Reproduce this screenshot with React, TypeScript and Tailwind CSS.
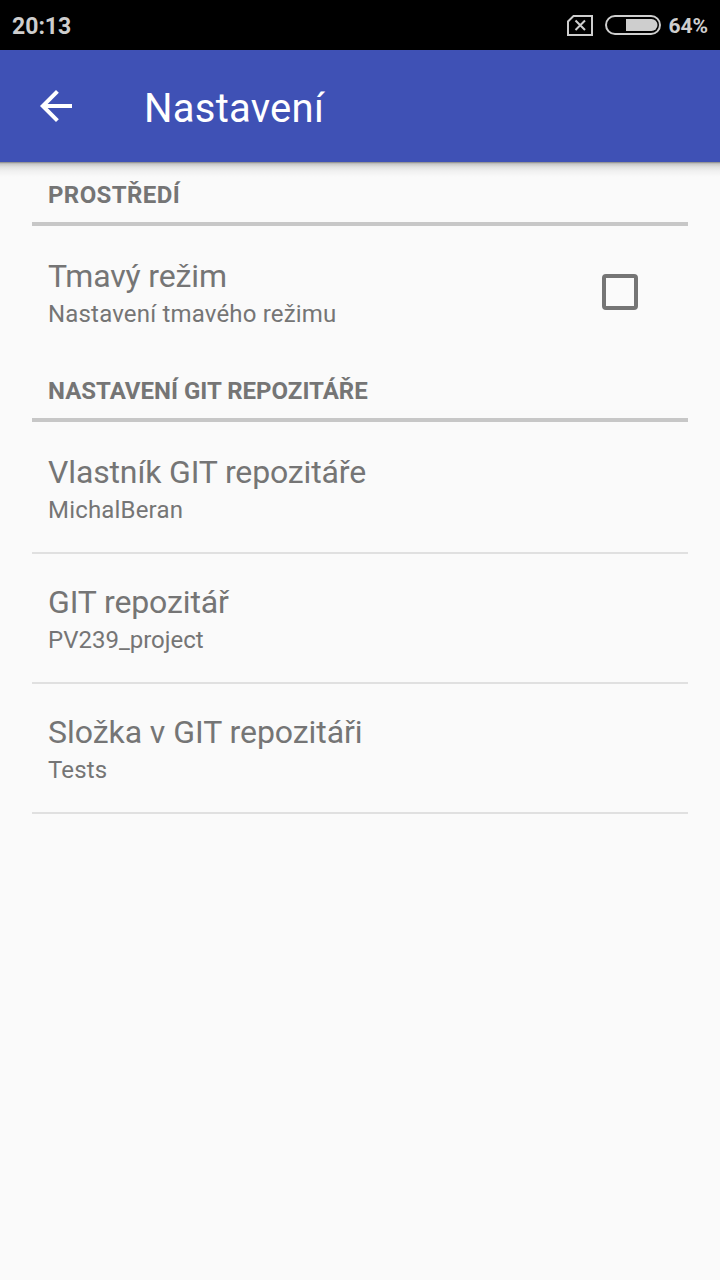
import React from "react";

function SectionTitle({ children, className = "" }: { children: React.ReactNode; className?: string }) {
  return (
    <h2
      className={`h-16 border-b-4 border-[#c7c7c7] px-4 pt-[19px] text-[24px] font-bold leading-[28px] text-[#757575] ${className}`}
    >
      {children}
    </h2>
  );
}

interface RowProps {
  title: string;
  value: string;
  valueClass?: string;
  titleClass?: string;
}

function Labels({ title, value, titleClass = "tracking-[-0.14px]", valueClass = "tracking-[0.18px]" }: RowProps) {
  return (
    <div className="text-[#757575]">
      <div className={`text-[32px] leading-[38px] ${titleClass}`}>{title}</div>
      <div className={`mt-px text-[24px] leading-[36px] ${valueClass}`}>{value}</div>
    </div>
  );
}

function Item(props: RowProps) {
  return (
    <div className="h-[130px] border-b-2 border-[#e0e0e0] px-4 pt-[29px]">
      <Labels {...props} />
    </div>
  );
}

function StatusBar() {
  return (
    <div className="flex h-[50px] items-center bg-black px-3 font-bold text-[#cecece]">
      <span className="pt-[3px] text-[23px] leading-[27px]">20:13</span>
      <svg className="mt-0.5 ml-auto" width="26" height="22" viewBox="0 0 26 22" fill="none" stroke="currentColor">
        <path d="M6.5 1H25V20H1V6.5Z" strokeWidth="2" />
        <path d="M8.5 5.5L18 15M18 5.5L8.5 15" strokeWidth="2" />
      </svg>
      <svg className="ml-3" width="56" height="20" viewBox="0 0 56 20">
        <rect x="1" y="1" width="54" height="18" rx="9" fill="none" stroke="currentColor" strokeWidth="2" />
        <path d="M21 4H46.5a6 6 0 0 1 0 12H21Z" fill="currentColor" />
      </svg>
      <span className="ml-[7px] pt-[2px] text-[21px] leading-[26px]">64%</span>
    </div>
  );
}

export default function App() {
  return (
    <div className="flex h-[1280px] w-[720px] flex-col bg-[#fafafa] font-['Roboto',sans-serif]">
      <StatusBar />
      <header className="flex h-28 items-center bg-[#3f51b5] pl-8 text-white">
        <svg width="48" height="48" viewBox="0 0 24 24" fill="currentColor">
          <path d="M20 11H7.83l5.59-5.59L12 4l-8 8 8 8 1.41-1.41L7.83 13H20v-2z" />
        </svg>
        <h1 className="ml-16 pt-[5px] text-[40px] leading-[48px] tracking-[0.25px]">Nastavení</h1>
      </header>
      <div className="-mb-4 h-4 bg-[linear-gradient(to_bottom,rgba(0,0,0,0.5)_0px,rgba(0,0,0,0.3)_1px,rgba(0,0,0,0.2)_2px,rgba(0,0,0,0.1)_5px,rgba(0,0,0,0.04)_9px,transparent_15px)]" />
      <main className="px-8">
        <SectionTitle className="tracking-[0.4px]">PROSTŘEDÍ</SectionTitle>
        <div className="flex h-[132px] justify-between pr-[50px] pl-4 pt-[31px]">
          <Labels title="Tmavý režim" value="Nastavení tmavého režimu" />
          <div role="checkbox" aria-checked={false} className="mt-[17px] size-9 rounded-[4px] border-4 border-[#757575]" />
        </div>
        <SectionTitle>NASTAVENÍ GIT REPOZITÁŘE</SectionTitle>
        <div className="pt-0.5">
          <Item title="Vlastník GIT repozitáře" value="MichalBeran" />
          <Item title="GIT repozitář" value="PV239_project" titleClass="tracking-[-0.12px]" valueClass="tracking-normal" />
          <Item title="Složka v GIT repozitáři" value="Tests" titleClass="tracking-[-0.05px]" />
        </div>
      </main>
    </div>
  );
}
